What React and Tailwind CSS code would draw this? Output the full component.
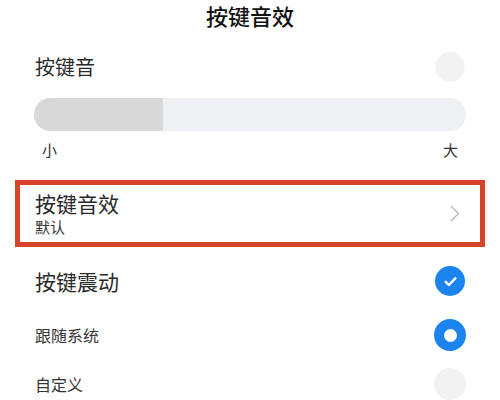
import React from 'react';

const font = { fontFamily: '"Noto Sans CJK SC", "Noto Sans", sans-serif' };

const GrayDot = ({ size = 'w-[30px] h-[30px]' }) => (
  <div className={`${size} rounded-full bg-[#f2f2f2]`} />
);

const CheckDot = () => (
  <div className="w-[30px] h-[30px] rounded-full bg-[#1c84ee] flex items-center justify-center">
    <svg width="17" height="17" viewBox="0 0 16 16" fill="none">
      <path d="M3.5 8.3l3 3 6-6.3" stroke="#fff" strokeWidth="2.3" strokeLinecap="round" strokeLinejoin="round" />
    </svg>
  </div>
);

const RingDot = () => (
  <div className="w-[32px] h-[32px] rounded-full bg-[#1c84ee] flex items-center justify-center">
    <div className="w-[13px] h-[13px] rounded-full bg-white" />
  </div>
);

export default function App() {
  return (
    <div className="w-[500px] h-[400px] bg-white overflow-hidden flex flex-col text-[#222]" style={font}>
      <div className="h-[31px] flex items-center justify-center text-[22px] leading-[31px] font-medium text-[#111]">
        按键音效
      </div>

      <div className="mt-[21px] h-[30px] flex items-center justify-between pl-[35px] pr-[35px]">
        <span className="text-[20px] leading-[30px] text-[#2a2a2a]">按键音</span>
        <GrayDot />
      </div>

      <div className="mt-[16px] mx-[34px] h-[33px] rounded-full bg-[#eef0f4] overflow-hidden flex">
        <div className="w-[129px] h-full bg-[#d8d8d8]" />
      </div>

      <div className="mt-[9px] h-[20px] flex items-center justify-between pl-[42px] pr-[42px] text-[15px] leading-[20px] text-[#333]">
        <span>小</span>
        <span>大</span>
      </div>

      <div className="mt-[20px] mx-[15px] h-[68px] border-[5px] border-[#d8432b] flex items-center justify-between pl-[15px] pr-[20px]">
        <div className="flex flex-col">
          <span className="text-[21px] leading-[28px] text-[#2a2a2a]">按键音效</span>
          <span className="text-[15px] leading-[20px] text-[#333]">默认</span>
        </div>
        <svg width="10" height="17" viewBox="0 0 10 17" fill="none">
          <path d="M1.5 1.5l7 7-7 7" stroke="#b9b9b9" strokeWidth="1.3" strokeLinecap="round" strokeLinejoin="round" />
        </svg>
      </div>

      <div className="mt-[19px] h-[30px] flex items-center justify-between pl-[35px] pr-[35px]">
        <span className="text-[21px] leading-[30px] text-[#2a2a2a]">按键震动</span>
        <CheckDot />
      </div>

      <div className="mt-[23px] h-[32px] flex items-center justify-between pl-[35px] pr-[34px]">
        <span className="text-[16px] leading-[32px] text-[#333]">跟随系统</span>
        <RingDot />
      </div>

      <div className="mt-[17px] h-[32px] flex items-center justify-between pl-[35px] pr-[34px]">
        <span className="text-[16px] leading-[32px] text-[#333]">自定义</span>
        <GrayDot size="w-[32px] h-[32px]" />
      </div>
    </div>
  );
}
